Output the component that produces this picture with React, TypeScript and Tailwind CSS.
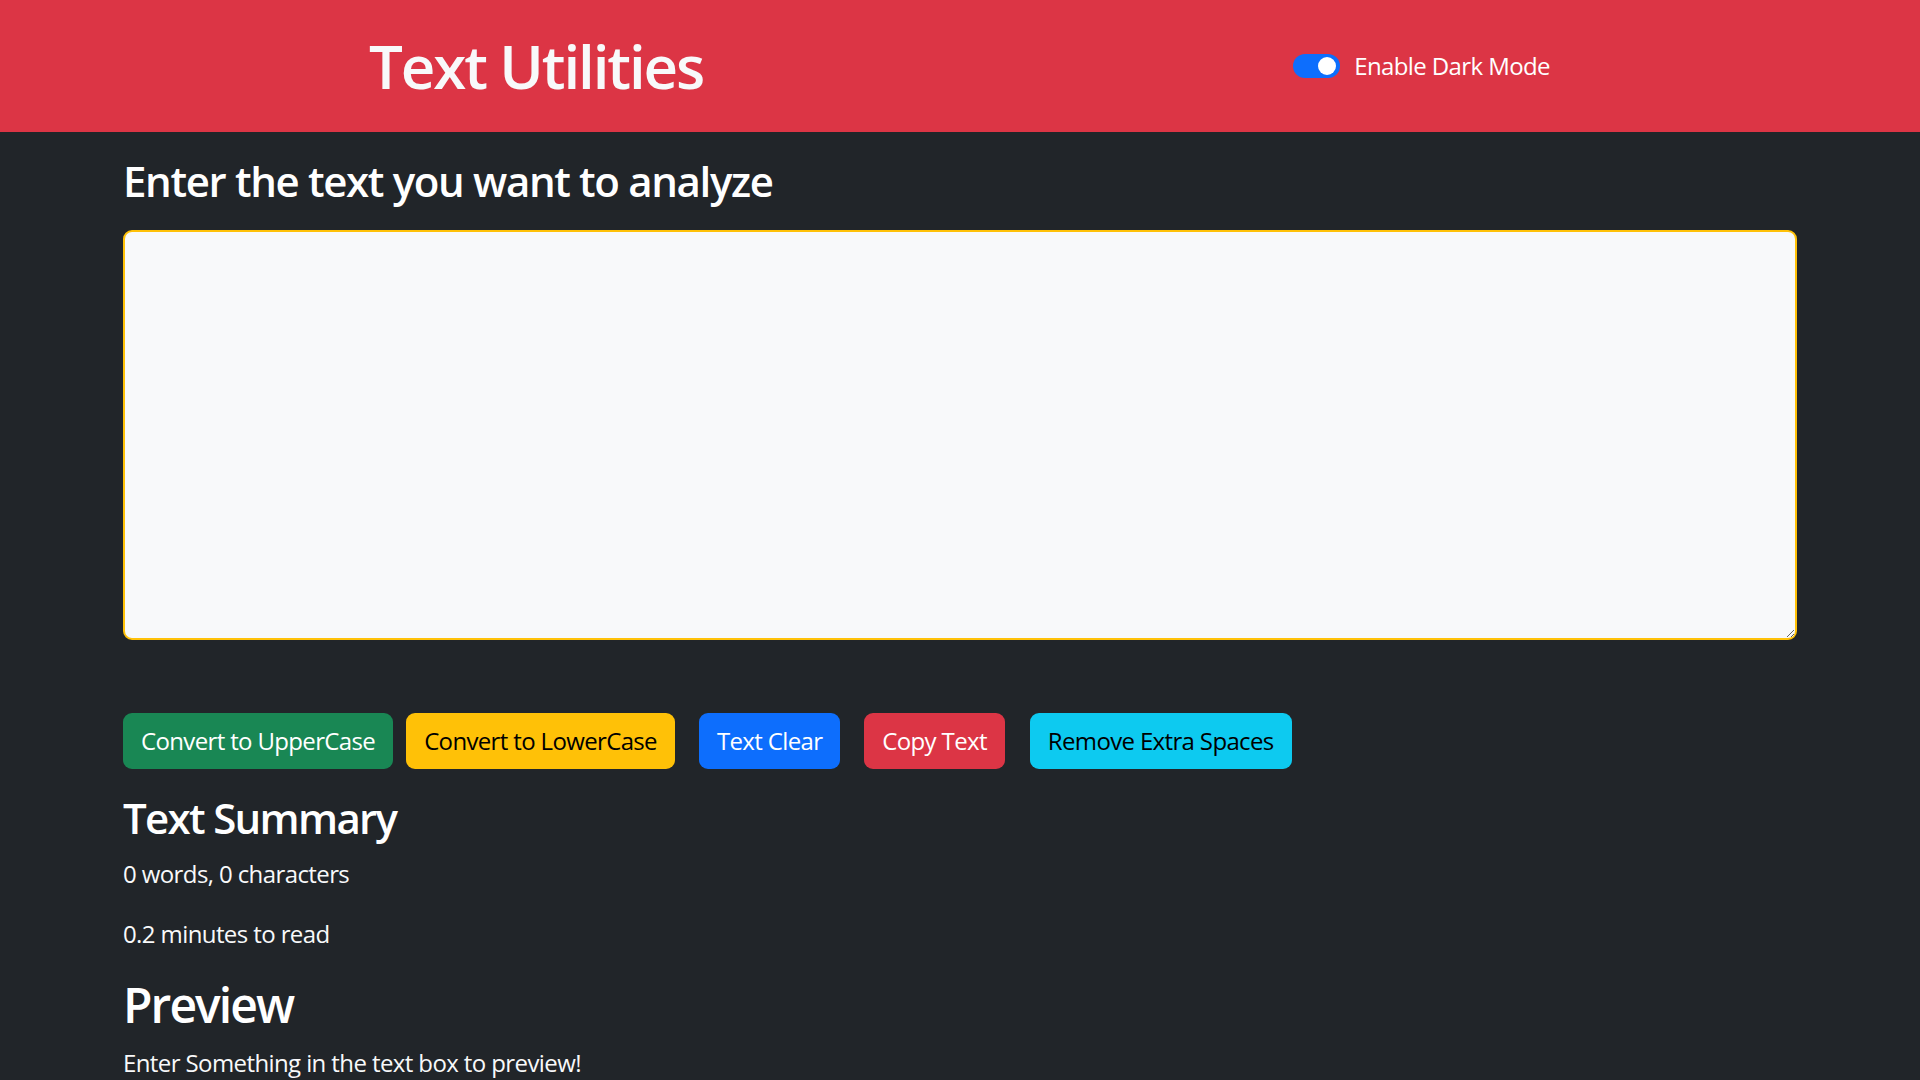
function ToggleSwitch() {
  return (
    <span className="relative inline-block h-[24px] w-[47px] rounded-full bg-[#0d6efd]">
      <span className="absolute right-[4px] top-[3px] h-[18px] w-[18px] rounded-full bg-white" />
    </span>
  );
}

function Btn({ label, color, dark }: { label: string; color: string; dark?: boolean }) {
  return (
    <button
      className={`h-[56px] rounded-[9px] px-[18px] text-[24px] leading-[36px] tracking-[-0.027em] ${color} ${
        dark ? "text-black" : "text-white"
      }`}
    >
      {label}
    </button>
  );
}

export default function App() {
  return (
    <div
      className="min-h-screen bg-[#212529] text-[#f8f9fa]"
      style={{ fontFamily: '"Segoe UI", "Open Sans", "Noto Sans", sans-serif' }}
    >
      <nav className="flex h-[132px] items-center bg-[#dc3545]">
        <h1 className="ml-[369px] text-[60px] font-semibold leading-[72px] tracking-[-0.035em] text-[#f8f9fa]">
          Text Utilities
        </h1>
        <div className="ml-auto mr-[370px] flex items-center gap-[14px]">
          <ToggleSwitch />
          <span className="text-[24px] leading-[36px] tracking-[-0.025em] text-white">Enable Dark Mode</span>
        </div>
      </nav>

      <main className="mx-auto w-[1710px] px-[18px]">
        <h3 className="pt-[24px] text-[42px] font-semibold leading-[50px] tracking-[-0.032em] text-white">
          Enter the text you want to analyze
        </h3>
        <textarea
          className="mt-[24px] block h-[410px] w-full rounded-[9px] border-2 border-[#ffc107] bg-[#f8f9fa] px-[18px] py-[9px] text-[24px] text-black outline-none"
          rows={8}
        />

        <div className="mt-[73px] flex items-center">
          <Btn label="Convert to UpperCase" color="bg-[#198754]" />
          <div className="ml-[13px]">
            <Btn label="Convert to LowerCase" color="bg-[#ffc107]" dark />
          </div>
          <div className="ml-[24px]">
            <Btn label="Text Clear" color="bg-[#0d6efd]" />
          </div>
          <div className="ml-[24px]">
            <Btn label="Copy Text" color="bg-[#dc3545]" />
          </div>
          <div className="ml-[25px]">
            <Btn label="Remove Extra Spaces" color="bg-[#0dcaf0]" dark />
          </div>
        </div>

        <h3 className="mt-[24px] text-[42px] font-semibold leading-[50px] tracking-[-0.04em] text-white">
          Text Summary
        </h3>
        <p className="mt-[13px] text-[24px] leading-[36px] tracking-[-0.025em]">0 words, 0 characters</p>
        <p className="mt-[24px] text-[24px] leading-[36px] tracking-[-0.025em]">0.2 minutes to read</p>
        <h2 className="mt-[24px] text-[48px] font-semibold leading-[58px] tracking-[-0.04em] text-white">Preview</h2>
        <p className="mt-[11px] text-[24px] leading-[36px] tracking-[-0.025em]">
          Enter Something in the text box to preview!
        </p>
      </main>
    </div>
  );
}
